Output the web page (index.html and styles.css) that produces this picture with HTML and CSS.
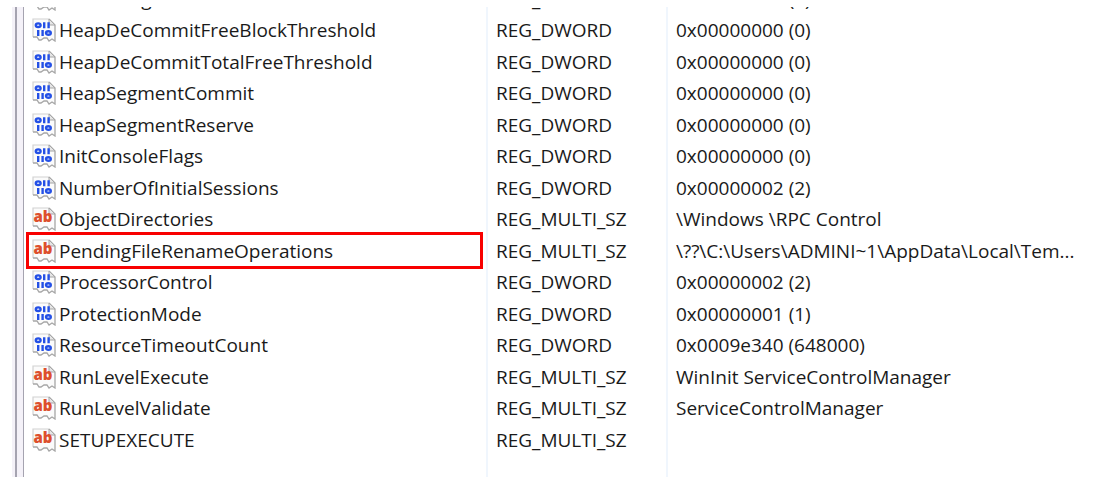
FILE: index.html
```
<!DOCTYPE html>
<html lang="en">
<head>
    <meta charset="UTF-8">
    <meta name="viewport" content="width=device-width, initial-scale=1.0">
    <title>Registry Editor - Session Manager</title>
    <link rel="stylesheet" href="styles.css">
</head>
<body>
    <!-- value icons, used by every row -->
    <svg class="sprite" aria-hidden="true">
        <symbol id="page" viewBox="0 0 24 24">
            <path d="M1 19V1H17L23 7V23L19 21L16 23L14 20H11L9 22H7L5 19Z" fill="#fbfbfb"/>
            <path d="M1 19V1H17" fill="none" stroke="#d2d2d2" stroke-width="1.2"/>
            <path d="M17 1L23 7V23L20 21L17 23L15 20H12L9 22H7L5 19H1" fill="none" stroke="#a6a6a6" stroke-width="1.3"/>
            <path d="M17 1V7H23Z" fill="#e6e6e6" stroke="#a6a6a6" stroke-width="1"/>
        </symbol>
        <symbol id="binary" viewBox="0 0 24 24">
            <use href="#page"/>
            <g fill="none" stroke="#2450e6" stroke-width="2.4">
                <ellipse cx="6.2" cy="7.2" rx="2.4" ry="1.8"/>
                <path d="M12.2 4.2V10.2M16.6 4.2V10.2M6.2 12V18M10.6 12V18"/>
                <ellipse cx="16.4" cy="15" rx="2.4" ry="1.8"/>
            </g>
        </symbol>
        <symbol id="string" viewBox="0 0 24 24">
            <use href="#page"/>
            <text class="ab" x="11" y="15" text-anchor="middle">ab</text>
        </symbol>
    </svg>

    <main class="editor">
        <div class="splitter"></div>
        <div class="list">
            <table class="values">
                <tbody>
                    <tr><td><span class="name"><svg class="icon"><use href="#binary"/></svg>GlobalFlag</span></td><td>REG_DWORD</td><td>0x00000000 (0)</td></tr>
                    <tr><td><span class="name"><svg class="icon"><use href="#binary"/></svg>HeapDeCommitFreeBlockThreshold</span></td><td>REG_DWORD</td><td>0x00000000 (0)</td></tr>
                    <tr><td><span class="name"><svg class="icon"><use href="#binary"/></svg>HeapDeCommitTotalFreeThreshold</span></td><td>REG_DWORD</td><td>0x00000000 (0)</td></tr>
                    <tr><td><span class="name"><svg class="icon"><use href="#binary"/></svg>HeapSegmentCommit</span></td><td>REG_DWORD</td><td>0x00000000 (0)</td></tr>
                    <tr><td><span class="name"><svg class="icon"><use href="#binary"/></svg>HeapSegmentReserve</span></td><td>REG_DWORD</td><td>0x00000000 (0)</td></tr>
                    <tr><td><span class="name"><svg class="icon"><use href="#binary"/></svg>InitConsoleFlags</span></td><td>REG_DWORD</td><td>0x00000000 (0)</td></tr>
                    <tr><td><span class="name"><svg class="icon"><use href="#binary"/></svg>NumberOfInitialSessions</span></td><td>REG_DWORD</td><td>0x00000002 (2)</td></tr>
                    <tr><td><span class="name"><svg class="icon"><use href="#string"/></svg>ObjectDirectories</span></td><td>REG_MULTI_SZ</td><td>\Windows \RPC Control</td></tr>
                    <tr class="marked"><td><span class="name"><svg class="icon"><use href="#string"/></svg>PendingFileRenameOperations</span></td><td>REG_MULTI_SZ</td><td>\??\C:\Users\ADMINI~1\AppData\Local\Tem...</td></tr>
                    <tr><td><span class="name"><svg class="icon"><use href="#binary"/></svg>ProcessorControl</span></td><td>REG_DWORD</td><td>0x00000002 (2)</td></tr>
                    <tr><td><span class="name"><svg class="icon"><use href="#binary"/></svg>ProtectionMode</span></td><td>REG_DWORD</td><td>0x00000001 (1)</td></tr>
                    <tr><td><span class="name"><svg class="icon"><use href="#binary"/></svg>ResourceTimeoutCount</span></td><td>REG_DWORD</td><td>0x0009e340 (648000)</td></tr>
                    <tr><td><span class="name"><svg class="icon"><use href="#string"/></svg>RunLevelExecute</span></td><td>REG_MULTI_SZ</td><td>WinInit ServiceControlManager</td></tr>
                    <tr><td><span class="name"><svg class="icon"><use href="#string"/></svg>RunLevelValidate</span></td><td>REG_MULTI_SZ</td><td>ServiceControlManager</td></tr>
                    <tr><td><span class="name"><svg class="icon"><use href="#string"/></svg>SETUPEXECUTE</span></td><td>REG_MULTI_SZ</td><td></td></tr>
                </tbody>
                <tfoot>
                    <tr><td></td><td></td><td></td></tr>
                </tfoot>
            </table>
        </div>
    </main>
</body>
</html>
```

FILE: styles.css
```
body {
    margin: 0;
    background-color: #fff;
    color: #1a1a1a;
    font-family: "Open Sans", "Noto Sans", sans-serif;
    font-size: 19px;
    line-height: 24px;
}
.sprite {
    display: none;
}
.editor {
    display: flex;
    padding: 7px 0 19px 12px;
}
.splitter {
    flex: none;
    box-sizing: border-box;
    width: 12px;
    background: linear-gradient(to right, #f4f1f8 3px, #a5a3b0 3px 5px, #f4f1f8 5px 11px, #a5a3b0 11px);
}
.list {
    flex: 1;
    overflow: hidden;
}
.values {
    width: 100%;
    /* scrolled down, only the foot of the first row shows */
    margin-top: -24px;
    border-collapse: collapse;
    table-layout: fixed;
}
.values td {
    height: 31px;
    padding: 0 0 0 8px;
    white-space: nowrap;
}
.values tbody tr:nth-child(even) td {
    height: 32px;
}
.values tfoot td {
    height: 22px;
}
.values td:nth-child(1) {
    width: 454px;
}
.values td:nth-child(2) {
    width: 170px;
}
.values td + td {
    border-left: 2px solid #f0f6fd;
}
.name {
    display: flex;
    align-items: center;
    gap: 3px;
}
.icon {
    flex: none;
    width: 24px;
    height: 24px;
}
.ab {
    fill: #dd4f2c;
    font-family: "Open Sans", sans-serif;
    font-size: 15px;
    font-weight: 800;
}
.marked .name {
    height: 31px;
    margin: 0 6px 0 -3px;
    padding-left: 3px;
    outline: 3px solid #f80000;
}
```
